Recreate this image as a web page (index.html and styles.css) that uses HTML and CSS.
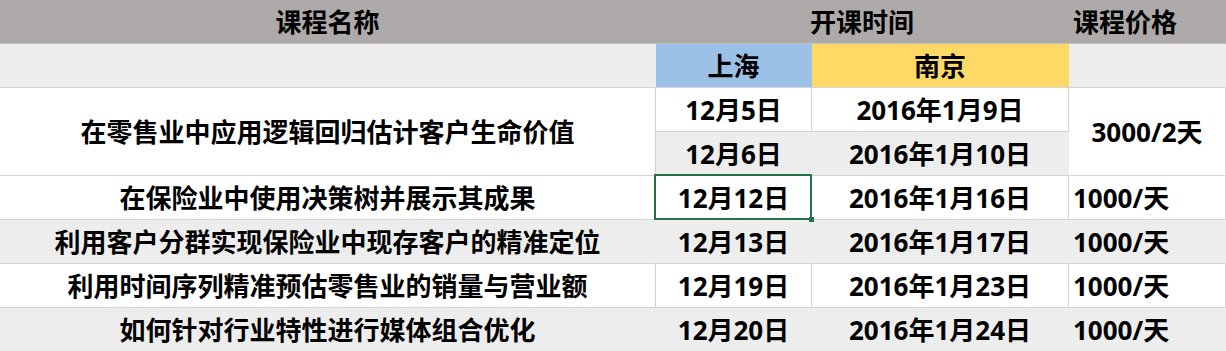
FILE: index.html
```html
<!DOCTYPE html>
<html lang="zh-CN">
<head>
<meta charset="utf-8">
<title>课程安排</title>
<link rel="stylesheet" href="styles.css">
</head>
<body>
<div class="sheet">
  <div class="cell head c-name">课程名称</div>
  <div class="cell head c-time">开课时间</div>
  <div class="cell head c-price left">课程价格</div>

  <div class="cell gray"></div>
  <div class="cell city sh">上海</div>
  <div class="cell city nj">南京</div>
  <div class="cell gray"></div>

  <div class="cell white span2">在零售业中应用逻辑回归估计客户生命价值</div>
  <div class="cell white">12月5日</div>
  <div class="cell white">2016年1月9日</div>
  <div class="cell white span2">3000/2天</div>
  <div class="cell gray">12月6日</div>
  <div class="cell gray">2016年1月10日</div>

  <div class="cell white">在保险业中使用决策树并展示其成果</div>
  <div class="cell white selected">12月12日</div>
  <div class="cell white">2016年1月16日</div>
  <div class="cell white left">1000/天</div>

  <div class="cell gray">利用客户分群实现保险业中现存客户的精准定位</div>
  <div class="cell gray">12月13日</div>
  <div class="cell gray">2016年1月17日</div>
  <div class="cell gray left">1000/天</div>

  <div class="cell white">利用时间序列精准预估零售业的销量与营业额</div>
  <div class="cell white">12月19日</div>
  <div class="cell white">2016年1月23日</div>
  <div class="cell white left">1000/天</div>

  <div class="cell gray">如何针对行业特性进行媒体组合优化</div>
  <div class="cell gray">12月20日</div>
  <div class="cell gray">2016年1月24日</div>
  <div class="cell gray left">1000/天</div>
</div>
</body>
</html>
```
FILE: styles.css
```css
html, body {
  margin: 0;
  padding: 0;
  background: #ffffff;
  overflow: hidden;
}

.sheet {
  display: grid;
  grid-template-columns: 656px 156px 257px 157px;
  grid-auto-rows: 44px;
  width: 1226px;
  font-family: "Open Sans", "Noto Sans CJK SC", sans-serif;
  font-weight: 700;
  font-size: 26px;
  color: #000000;
}

.cell {
  box-sizing: border-box;
  display: flex;
  align-items: center;
  justify-content: center;
  white-space: nowrap;
  border-right: 1px solid #d4d4d4;
  border-bottom: 1px solid #d4d4d4;
  line-height: 1;
  padding-top: 1px;
}

.left {
  justify-content: flex-start;
  padding-left: 4px;
}

.head {
  background: #aeaaaa;
  border-right-color: #aeaaaa;
  border-bottom-color: #c3c0c0;
}

.c-time {
  grid-column: span 2;
}

.gray {
  background: #ededed;
  border-right-color: #ededed;
}

.white {
  background: #ffffff;
}

.city.sh {
  background: #9bc2e6;
  border-right-color: #9bc2e6;
}

.city.nj {
  background: #ffd966;
  border-right-color: #ffd966;
}

.span2 {
  grid-row: span 2;
}

.selected {
  position: relative;
}

.selected::after {
  content: "";
  position: absolute;
  left: -2px;
  top: -2px;
  right: -1px;
  bottom: -1px;
  border: 2px solid #217346;
}

.selected::before {
  content: "";
  position: absolute;
  right: -3px;
  bottom: -3px;
  width: 5px;
  height: 5px;
  background: #217346;
  z-index: 1;
}
```
